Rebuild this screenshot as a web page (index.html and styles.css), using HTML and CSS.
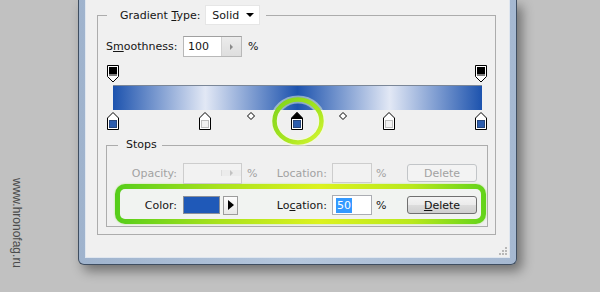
FILE: index.html
```html
<!DOCTYPE html>
<html lang="ru">
<head>
  <meta charset="UTF-8" />
  <meta name="viewport" content="width=device-width, initial-scale=1.0"/>
  <title>Gradient Editor — Stops</title>
  <link rel="stylesheet" href="styles.css">
</head>
<body>
  <div class="page">
    <div class="side">
      <span class="watermark">www.hronofag.ru</span>
    </div>

    <div class="window">
      <div class="panel">
        <fieldset class="group">
          <legend class="type-legend">
            <span>Gradient <u>T</u>ype:</span>
            <span class="select">Solid <i class="caret"></i></span>
          </legend>

          <div class="smooth-row">
            <span class="smooth-label">S<u>m</u>oothness:</span>
            <span class="spin">
              <span class="spin-value">100</span>
              <span class="spin-btn"><i></i></span>
            </span>
            <span class="unit">%</span>
          </div>

          <div class="editor">
            <div class="track track-top">
              <span class="marker" style="left:0%">
                <svg width="12" height="18" viewBox="0 0 12 18"><path d="M0.5 0.5H11.5V11.5L6 17L0.5 11.5Z" fill="#fff" stroke="#000"/><rect x="2" y="2" width="8" height="7" fill="#000"/><rect x="2" y="9" width="8" height="2" fill="#7d7d7d"/></svg>
              </span>
              <span class="marker" style="left:100%">
                <svg width="12" height="18" viewBox="0 0 12 18"><path d="M0.5 0.5H11.5V11.5L6 17L0.5 11.5Z" fill="#fff" stroke="#000"/><rect x="2" y="2" width="8" height="7" fill="#000"/><rect x="2" y="9" width="8" height="2" fill="#7d7d7d"/></svg>
              </span>
            </div>

            <div class="bar"></div>

            <div class="track track-bottom">
              <span class="marker" style="left:0%">
                <svg width="12" height="18" viewBox="0 0 12 18"><path d="M0.5 17.5V6L6 0.5L11.5 6V17.5Z" fill="#fff" stroke="#000"/><rect x="2.5" y="8.5" width="7" height="7" fill="#2c5dae" stroke="#26467c"/></svg>
              </span>
              <span class="marker" style="left:25%">
                <svg width="12" height="18" viewBox="0 0 12 18"><path d="M0.5 17.5V6L6 0.5L11.5 6V17.5Z" fill="#fff" stroke="#000"/><rect x="2.5" y="8.5" width="7" height="7" fill="#f1f1f1" stroke="#bdbdbd"/></svg>
              </span>
              <span class="midpoint" style="left:37.5%">
                <svg width="8" height="8" viewBox="0 0 8 8"><path d="M4 0.5L7.5 4L4 7.5L0.5 4Z" fill="#fff" stroke="#000"/></svg>
              </span>
              <span class="marker" style="left:50%">
                <svg width="12" height="18" viewBox="0 0 12 18"><path d="M0.5 17.5V6L6 0.5L11.5 6V17.5Z" fill="#fff" stroke="#000"/><path d="M0.5 6.5L6 0.5L11.5 6.5Z" fill="#000" stroke="#000"/><rect x="2.5" y="8.5" width="7" height="7" fill="#2c5dae" stroke="#26467c"/></svg>
              </span>
              <span class="midpoint" style="left:62.5%">
                <svg width="8" height="8" viewBox="0 0 8 8"><path d="M4 0.5L7.5 4L4 7.5L0.5 4Z" fill="#fff" stroke="#000"/></svg>
              </span>
              <span class="marker" style="left:75%">
                <svg width="12" height="18" viewBox="0 0 12 18"><path d="M0.5 17.5V6L6 0.5L11.5 6V17.5Z" fill="#fff" stroke="#000"/><rect x="2.5" y="8.5" width="7" height="7" fill="#f1f1f1" stroke="#bdbdbd"/></svg>
              </span>
              <span class="marker" style="left:100%">
                <svg width="12" height="18" viewBox="0 0 12 18"><path d="M0.5 17.5V6L6 0.5L11.5 6V17.5Z" fill="#fff" stroke="#000"/><rect x="2.5" y="8.5" width="7" height="7" fill="#2c5dae" stroke="#26467c"/></svg>
              </span>

              <!-- annotation ring round the selected stop -->
              <svg class="ring" width="56" height="52" viewBox="0 0 56 52">
                <defs>
                  <linearGradient id="ringGrad" x1="0" y1="0" x2="1" y2="1">
                    <stop offset="0" stop-color="#7fd41c"/>
                    <stop offset="0.6" stop-color="#a8e620"/>
                    <stop offset="1" stop-color="#d8f632"/>
                  </linearGradient>
                </defs>
                <ellipse cx="28" cy="26" rx="23.5" ry="21.5" fill="none" stroke="#f4fbd8" stroke-width="8" opacity="0.5"/>
                <ellipse cx="28" cy="26" rx="23.5" ry="21.5" fill="none" stroke="url(#ringGrad)" stroke-width="4.5"/>
              </svg>
            </div>
          </div>

          <fieldset class="stops">
            <legend class="stops-legend">Stops</legend>

            <div class="stop-row disabled">
              <span class="stop-label">Opacity:</span>
              <span class="stop-field spin spin-off">
                <span class="spin-value"></span>
                <span class="spin-btn"><i></i></span>
              </span>
              <span class="stop-mid"><span>%</span><span>Location:</span></span>
              <span class="loc-input"></span>
              <span class="stop-pct">%</span>
              <span class="btn">Delete</span>
            </div>

            <div class="stop-row marked">
              <span class="stop-label">Color:</span>
              <span class="stop-field">
                <span class="swatch"></span>
                <span class="swatch-btn"><i></i></span>
              </span>
              <span class="stop-mid"><span></span><span>Lo<u>c</u>ation:</span></span>
              <span class="loc-input"><span class="selected">50</span></span>
              <span class="stop-pct">%</span>
              <span class="btn"><u>D</u>elete</span>
            </div>
          </fieldset>
        </fieldset>

        <div class="grip">
          <svg width="9" height="9" viewBox="0 0 9 9">
            <rect x="6" y="0" width="2" height="2" fill="#b8b8b8"/>
            <rect x="3" y="3" width="2" height="2" fill="#b8b8b8"/>
            <rect x="6" y="3" width="2" height="2" fill="#b8b8b8"/>
            <rect x="0" y="6" width="2" height="2" fill="#b8b8b8"/>
            <rect x="3" y="6" width="2" height="2" fill="#b8b8b8"/>
            <rect x="6" y="6" width="2" height="2" fill="#b8b8b8"/>
          </svg>
        </div>
      </div>
    </div>
  </div>
</body>
</html>
```

FILE: styles.css
```css
body {
  margin: 0;
  background: #c1c1c1;
  font-family: "DejaVu Sans", sans-serif;
  font-size: 11px;
  color: #151515;
}

.page {
  display: flex;
  height: 292px;
  overflow: hidden;
}

.side {
  width: 78px;
  flex: none;
  box-sizing: border-box;
  padding: 178px 0 0 11px;
}

.watermark {
  display: inline-block;
  writing-mode: vertical-rl;
  font: 12px "Liberation Sans", sans-serif;
  line-height: 12px;
  color: #4b4b4b;
}

/* window frame */
.window {
  width: 439px;
  height: 265px;
  flex: none;
  box-sizing: border-box;
  display: flex;
  padding: 0 6px 6px;
  border: 1px solid #3f4e61;
  border-top: none;
  border-radius: 0 0 6px 6px;
  background: linear-gradient(to right, #9fb3cd, #b4c6dc 50%, #a5b8d1);
  box-shadow: 5px 6px 12px rgba(0,0,0,0.42);
}

.panel {
  flex: 1;
  display: flex;
  flex-direction: column;
  background: #f0f0f0;
  border: 1px solid #dfe6ef;
  border-top: none;
}

/* group boxes */
fieldset {
  min-inline-size: 0;
  border: 1px solid #acacac;
}

.group {
  margin: 5px 13px 0 11px;
  padding: 11px 0 7px 8px;
}

.type-legend {
  display: flex;
  align-items: center;
  margin-left: 1px;
  padding: 0 6px 0 13px;
  height: 20px;
}

.select {
  width: 55px;
  height: 20px;
  box-sizing: border-box;
  margin-left: 5px;
  padding: 0 5px 0 6px;
  display: flex;
  align-items: center;
  justify-content: space-between;
  background: #fff;
  border: 1px solid #e6e6e6;
}

.caret {
  border-top: 4px solid #000;
  border-left: 4px solid transparent;
  border-right: 4px solid transparent;
}

.smooth-row {
  display: flex;
  align-items: center;
  height: 21px;
}

.smooth-label {
  width: 71px;
  text-align: right;
}

.spin {
  width: 59px;
  height: 21px;
  box-sizing: border-box;
  margin-left: 6px;
  display: flex;
  background: #fff;
  border: 1px solid #b8b8b8;
  border-top-color: #a0a0a0;
}

.spin-value {
  flex: 1;
  padding-left: 4px;
  line-height: 19px;
}

.spin-btn {
  width: 19px;
  display: flex;
  align-items: center;
  justify-content: center;
  background: linear-gradient(#ececec, #dedede);
  border-left: 1px solid #d2d2d2;
}

.spin-btn i {
  border-left: 3px solid #8a8a8a;
  border-top: 3px solid transparent;
  border-bottom: 3px solid transparent;
}

.unit {
  margin-left: 6px;
}

/* gradient editor */
.editor {
  width: 369px;
  margin: 8px 0 0 7px;
  display: flex;
  flex-direction: column;
}

.track {
  position: relative;
  width: 368px;
  height: 20px;
}

.marker {
  position: absolute;
  top: 0;
  margin-left: -6px;
  height: 18px;
}

.marker svg,
.midpoint svg,
.grip svg {
  display: block;
}

.track-bottom .marker {
  top: 2px;
}

.midpoint {
  position: absolute;
  top: 2px;
  margin-left: -4px;
}

.bar {
  height: 25px;
  box-sizing: border-box;
  border-top: 1px solid #7b8798;
  background: linear-gradient(to right, #1d53ae 0%, #e2e8f5 25%, #1d53ae 50%, #e2e8f5 75%, #1d53ae 100%);
}

.ring {
  position: absolute;
  left: 157px;
  top: -15px;
}

/* stops */
.stops {
  margin: 8px 7px 0 0;
  padding: 10px 1px 2px 8px;
}

.stops-legend {
  margin-left: 3px;
  padding: 0 5px 0 8px;
  line-height: 14px;
}

.stop-row {
  display: flex;
  align-items: center;
  height: 22px;
  border: 5px solid transparent;
  border-width: 0 5px;
}

.stop-row.marked {
  height: 40px;
  box-sizing: border-box;
  padding-top: 2px;
  border-width: 5px;
  border-radius: 10px;
  background:
    linear-gradient(#f1f3f1, #f1f3f1) padding-box,
    linear-gradient(to right, #55cd1a 0%, #a9e21d 28%, #dcf21f 55%, #b9e81d 80%, #62d31a 100%) border-box;
  box-shadow: 0 0 2px rgba(140,220,40,0.6);
}

.stop-row.disabled {
  color: #a2a2a2;
}

.stop-label {
  width: 57px;
  text-align: right;
}

.stop-field {
  width: 59px;
  margin-left: 6px;
  display: flex;
  align-items: center;
}

.spin-off {
  background: #f2f2f2;
  border-color: #cdcdcd;
}

.spin-off .spin-btn {
  background: #ececec;
  border-left-color: #dcdcdc;
}

.spin-off .spin-btn i {
  border-left-color: #c2c2c2;
}

.swatch {
  width: 37px;
  height: 18px;
  box-sizing: border-box;
  background: #1f59b8;
  border: 1px solid #8a8f99;
}

.swatch-btn {
  width: 15px;
  height: 19px;
  box-sizing: border-box;
  margin-left: 3px;
  display: flex;
  align-items: center;
  justify-content: center;
  background: linear-gradient(#fdfdfd, #e8e8e8);
  border: 1px solid #9c9c9c;
}

.swatch-btn i {
  border-left: 6px solid #000;
  border-top: 5px solid transparent;
  border-bottom: 5px solid transparent;
}

.stop-mid {
  width: 85px;
  box-sizing: border-box;
  padding-left: 5px;
  display: flex;
  justify-content: space-between;
}

.loc-input {
  width: 40px;
  height: 20px;
  box-sizing: border-box;
  margin-left: 5px;
  padding-left: 3px;
  display: flex;
  align-items: center;
  background: #fff;
  border: 1px solid #abadb3;
}

.disabled .loc-input {
  background: #f2f2f2;
  border-color: #cdcdcd;
}

.selected {
  background: #3399ff;
  color: #fff;
  padding: 1px 1px;
}

.stop-pct {
  width: 12px;
  margin-left: 4px;
}

.btn {
  width: 70px;
  height: 18px;
  box-sizing: border-box;
  margin-left: 19px;
  display: flex;
  align-items: center;
  justify-content: center;
  border: 1px solid #707070;
  border-radius: 3px;
  background: linear-gradient(#f4f4f4 0%, #ebebeb 48%, #dcdcdc 52%, #cfcfcf 100%);
  color: #111;
}

.disabled .btn {
  border-color: #c2c5c8;
  background: #f3f3f3;
  color: #a2a2a2;
}

.grip {
  align-self: flex-end;
  margin: 12px 1px 0 0;
}
```
